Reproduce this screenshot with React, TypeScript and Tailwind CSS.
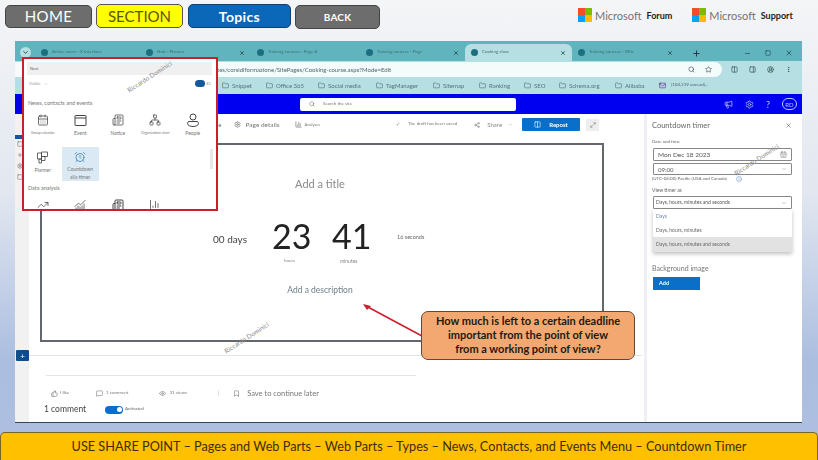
import { AlarmClock, BarChart3, Bookmark, CalendarDays, ChartNoAxesCombined, ChevronDown, Columns2, Eye, Folder, Info, Mail, Maximize2, Megaphone, MessageSquare, Minus, MoreVertical, Network, Newspaper, PanelRight, Plus, Search, Settings, Share2, Square, Star, ThumbsUp, TrendingUp, X, CircleUserRound } from "lucide-react";

function Ms({ label }: { label: string }) {
  return (
    <div className="flex items-center">
      <div className="grid h-[14px] w-[14px] grid-cols-2 gap-0">
        <div className="bg-[#f25022]" />
        <div className="bg-[#7fba00]" />
        <div className="bg-[#00a4ef]" />
        <div className="bg-[#ffb900]" />
      </div>
      <span className="ml-[3px] text-[11px] leading-none text-[#737373]">Microsoft</span>
      <span className="ml-[5px] text-[9px] font-bold leading-none text-[#222]">{label}</span>
    </div>
  );
}

function Tab({ label, w, active, close = true }: { label: string; w: string; active?: boolean; close?: boolean }) {
  return (
    <div className={`flex h-full shrink-0 items-center pl-[6px] pr-[6px] ${w} ${active ? "rounded-t-[6px] bg-[#b6dfe3]" : ""}`}>
      <div className="h-[7px] w-[7px] shrink-0 rounded-full bg-[#1d6f80]" />
      <span className="ml-[4px] flex-1 truncate text-[4.5px] text-[#3f6f76]">{label}</span>
      {close && <X className="h-[6px] w-[6px] shrink-0 text-[#244]" strokeWidth={3} />}
    </div>
  );
}

function Fav({ label, w }: { label: string; w: string }) {
  return (
    <div className={`flex shrink-0 items-center gap-[3px] ${w}`}>
      <Folder className="h-[7px] w-[7px] text-[#47666b]" />
      <span className="text-[6px] text-[#55727a]">{label}</span>
    </div>
  );
}

function Part({ icon, label, small, active }: { icon: React.ReactNode; label: React.ReactNode; small?: boolean; active?: boolean }) {
  return (
    <div className={`flex h-[34px] w-[37.5px] flex-col items-center pt-[3px] ${active ? "bg-[#dbe9f5]" : ""}`}>
      <div className="flex h-[14px] items-center text-[#444]">{icon}</div>
      <div className={`mt-[2px] text-center leading-[8px] text-[#777] ${small ? "text-[3.5px]" : "text-[5px]"}`}>{label}</div>
    </div>
  );
}

function Watermark({ className }: { className: string }) {
  return <div className={`absolute -rotate-[33deg] whitespace-nowrap text-[6.5px] text-[#8b8b8b] ${className}`}>Riccardo Dominici</div>;
}

function EventIcon() {
  return (
    <svg className="h-[13px] w-[13px]" viewBox="0 0 13 13" fill="none" stroke="currentColor">
      <rect x="1" y="1.5" width="11" height="10" rx="0.5" />
      <path d="M1 4h11" />
    </svg>
  );
}

function PersonIcon() {
  return (
    <svg className="h-[14px] w-[14px]" viewBox="0 0 14 14" fill="none" stroke="currentColor">
      <circle cx="7" cy="4" r="3" />
      <path d="M3 8.5h8a2 2 0 0 1 1.5 2c0 2-3 3-5.5 3s-5.5-1-5.5-3a2 2 0 0 1 1.5-2z" />
    </svg>
  );
}

function PlannerIcon() {
  return (
    <svg className="h-[13px] w-[13px]" viewBox="0 0 13 13" fill="none" stroke="currentColor" strokeWidth="0.8">
      <path d="M1.5 2h4v6h-4zM5.5 1h6v4.5h-6zM5.5 5.5h3.5v4h-3.5zM3 8h2.5v4H3z" />
    </svg>
  );
}

export default function App() {
  const i = "h-[12px] w-[12px]";
  return (
    <div className="relative flex h-[460px] w-[818px] flex-col overflow-hidden bg-[linear-gradient(180deg,#f4f5f7_0%,#e2e7f0_42%,#acbee0_78%,#aebfe0_100%)] font-['Lato','Liberation_Sans',sans-serif]">
      {/* Top navigation */}
      <div className="flex h-[41px] shrink-0 items-start pl-[5px] pt-[4px]">
        <div className="mt-[1px] flex h-[23px] w-[87px] items-center justify-center rounded-[5px] border border-[#444] bg-[#6d6d6d] text-[15px] tracking-wide text-white">HOME</div>
        <div className="ml-[4px] flex h-[24px] w-[87px] items-center justify-center rounded-[5px] border border-[#555] bg-[#ffff00] text-[15px] text-[#55580a]">SECTION</div>
        <div className="ml-[5px] flex h-[24px] w-[103px] items-center justify-center rounded-[5px] border border-[#123f70] bg-[#0b68b8] pt-[1px] text-[14px] font-bold tracking-wide text-white">Topics</div>
        <div className="ml-[4px] mt-[1px] flex h-[24px] w-[85px] items-center justify-center rounded-[5px] border border-[#444] bg-[#6d6d6d] text-[10px] font-bold tracking-wide text-white">BACK</div>
        <div className="ml-[198px] mt-[4px]"><Ms label="Forum" /></div>
        <div className="ml-[20px] mt-[4px]"><Ms label="Support" /></div>
      </div>

      {/* Browser window */}
      <div className="relative ml-[15px] flex h-[382px] w-[787px] shrink-0 flex-col border-b border-[#33475a] bg-white blur-[0.35px]">
        {/* Tabs */}
        <div className="flex h-[20px] shrink-0 items-end bg-[#5fb4bd] pl-[5px]">
          <div className="mb-[3px] mr-[4px] flex h-[11px] w-[11px] shrink-0 items-center justify-center rounded-full bg-[#b6dfe3]"><ChevronDown className="h-[7px] w-[7px] text-[#234]" strokeWidth={3} /></div>
          <div className="flex h-[17px]">
            <Tab label="Active users - X Interface" w="w-[105px]" close={false} />
            <Tab label="Hub - Planner" w="w-[111px]" />
            <Tab label="Training courses - Page A" w="w-[109px]" close={false} />
            <Tab label="Training courses - Page" w="w-[105px]" />
            <Tab label="Cooking class" w="w-[107px]" active />
            <Tab label="Training courses - Wile" w="w-[107px]" />
          </div>
          <Plus className="mb-[3px] ml-[13px] h-[9px] w-[9px] shrink-0 text-[#234]" strokeWidth={2.5} />
          <div className="mb-[4px] ml-[43px] flex items-center gap-[14px] text-[#234]">
            <Minus className="h-[7px] w-[7px]" />
            <Square className="h-[6px] w-[6px]" />
            <X className="h-[8px] w-[8px]" />
          </div>
        </div>
        {/* Address bar */}
        <div className="flex h-[16px] shrink-0 items-center bg-[#b6dfe3]">
          <div className="flex h-[15px] w-[707px] items-center rounded-r-full bg-[#f3fbfb] pl-[202px] pr-[10px]">
            <span className="flex-1 text-[6px] text-[#56666a]">tes/corsidiformazione/SitePages/Cooking-course.aspx?Mode=Edit</span>
            <Search className="h-[7px] w-[7px] text-[#345]" />
            <Star className="ml-[10px] h-[7px] w-[7px] text-[#345]" />
          </div>
          <div className="ml-[9px] flex items-center gap-[11px] text-[#244]">
            <Columns2 className="h-[7px] w-[7px]" />
            <PanelRight className="h-[7px] w-[7px]" />
            <CircleUserRound className="h-[7px] w-[7px]" />
            <MoreVertical className="h-[7px] w-[7px]" />
          </div>
        </div>
        {/* Bookmarks */}
        <div className="flex h-[17px] shrink-0 items-center bg-[#b6dfe3] pl-[207px]">
          <Fav label="Snippet" w="w-[44px]" />
          <Fav label="Office 365" w="w-[52px]" />
          <Fav label="Social media" w="w-[58px]" />
          <Fav label="TagManager" w="w-[57px]" />
          <Fav label="Sitemap" w="w-[46px]" />
          <Fav label="Ranking" w="w-[45px]" />
          <Fav label="SEO" w="w-[35px]" />
          <Fav label="Schema.org" w="w-[56px]" />
          <Fav label="Alibaba" w="w-[44px]" />
          <Mail className="mr-[5px] h-[7px] w-[7px] text-[#5a1c8c]" />
          <span className="text-[4.5px] text-[#56666a]">(104,319 unread)...</span>
        </div>
        {/* Blue bar */}
        <div className="flex h-[20px] shrink-0 items-center bg-[#0000f0] pl-[285px] pr-[5px]">
          <div className="flex h-[13px] w-[216px] items-center rounded-[2px] bg-white pl-[9px]">
            <Search className="h-[6px] w-[6px] text-[#666]" />
            <span className="ml-[8px] text-[4.5px] text-[#777]">Search the site</span>
          </div>
          <div className="ml-auto flex items-center gap-[12px] text-[#b9c8ff]">
            <Megaphone className="h-[9px] w-[9px]" />
            <Settings className="h-[9px] w-[9px]" />
            <span className="text-[9px] leading-none">?</span>
            <div className="flex h-[12px] w-[15px] items-center justify-center rounded-full border border-[#b9c8ff] text-[6px]">RD</div>
          </div>
        </div>

        {/* Content */}
        <div className="flex min-h-0 flex-1">
          {/* Rail */}
          <div className="flex w-[14px] shrink-0 flex-col bg-[#f1f1f1] pt-[21px] text-[#666]">
            <div className="mb-[2px] h-[4px] w-[7px] bg-[#14589c]" />
            <div className="flex flex-col items-start gap-[5px] pl-[2px]">
              <Square className="h-[6px] w-[6px]" />
              <Plus className="h-[6px] w-[6px]" />
              <Settings className="h-[6px] w-[6px]" />
              <Square className="h-[6px] w-[6px]" />
            </div>
          </div>
          {/* Main */}
          <div className="relative min-w-0 flex-1">
            {/* Command bar */}
            <div className="flex h-[21px] items-center pl-[186px]">
              <span className="text-[6px] text-[#666]">he</span>
              <Settings className="ml-[12px] h-[7px] w-[7px] text-[#666]" />
              <span className="ml-[5px] text-[6.5px] text-[#777]">Page details</span>
              <BarChart3 className="ml-[15px] h-[7px] w-[7px] text-[#666]" />
              <span className="ml-[3px] text-[4px] text-[#777]">Analyses</span>
              <span className="ml-[76px] text-[5px] text-[#888]">✓</span>
              <span className="ml-[8px] text-[4.5px] text-[#777]">The draft has been saved</span>
              <Share2 className="ml-[17px] h-[6px] w-[6px] text-[#777]" />
              <span className="ml-[7px] text-[6px] text-[#888]">Share</span>
              <ChevronDown className="ml-[6px] h-[5px] w-[5px] text-[#aaa]" />
              <div className="ml-[9px] flex h-[13px] w-[58px] items-center justify-center gap-[8px] rounded-[1px] bg-[#0a6fc9] text-white">
                <Columns2 className="h-[7px] w-[7px]" />
                <span className="text-[6px] font-bold">Repost</span>
              </div>
              <div className="ml-[6px] flex h-[12px] w-[13px] items-center justify-center bg-[#eee]"><Maximize2 className="h-[6px] w-[6px] text-[#777]" /></div>
            </div>
            {/* Web part frame */}
            <div className="ml-[11px] mt-[8px] flex h-[199px] w-[564px] flex-col items-center border-2 border-[#63666c] pl-[6px] pr-[10px]">
              <div className="mt-[31px] text-[11px] text-[#8a8a8a]">Add a title</div>
              <div className="mt-[23px] flex h-[50px] w-full items-start pl-[165px]">
                <div className="mt-[16px] w-[59px] text-[10px] text-[#444]">00 days</div>
                <div className="flex w-[60px] flex-col">
                  <span className="text-[34px] leading-[40px] text-[#222]">23</span>
                  <span className="ml-[12px] mt-[2px] text-[4.5px] text-[#888]">hours</span>
                </div>
                <div className="flex w-[65px] flex-col">
                  <span className="text-[34px] leading-[40px] text-[#222]">41</span>
                  <span className="ml-[8px] mt-[2px] text-[5px] text-[#888]">minutes</span>
                </div>
                <div className="mt-[17px] text-[5.5px] text-[#666]">16 seconds</div>
              </div>
              <div className="mt-[18px] text-[8.5px] text-[#6f7d86]">Add a description</div>
            </div>
            <div className="ml-[-14px] mt-[13px] h-px w-[627px] bg-[#e5e5e5]" />
            <div className="ml-[17px] mt-[19px] h-px w-[370px] bg-[#e3e3e3]" />
            {/* Reactions */}
            <div className="ml-[22px] mt-[12px] flex items-center">
              <ThumbsUp className="h-[7px] w-[7px] text-[#777]" />
              <span className="ml-[2px] text-[4.5px] text-[#777]">I like</span>
              <MessageSquare className="ml-[27px] h-[7px] w-[7px] text-[#777]" />
              <span className="ml-[3px] text-[4.5px] text-[#777]">1 comment</span>
              <Eye className="ml-[31px] h-[7px] w-[7px] text-[#777]" />
              <span className="ml-[3px] text-[4.5px] text-[#777]">31 views</span>
              <span className="ml-[31px] text-[5px] text-[#bbb]">|</span>
              <Bookmark className="ml-[14px] h-[7px] w-[7px] text-[#777]" />
              <span className="ml-[7px] text-[7.5px] text-[#777]">Save to continue later</span>
            </div>
            <div className="ml-[15px] mt-[4px] flex items-center">
              <span className="w-[61px] text-[8.5px] text-[#444]">1 comment</span>
              <div className="flex h-[8px] w-[18px] items-center justify-end rounded-full bg-[#0a6fc9] pr-[1px]"><div className="h-[5px] w-[5px] rounded-full bg-white" /></div>
              <span className="ml-[2px] text-[4.5px] text-[#666]">Activated</span>
            </div>
            <div className="absolute left-[1px] top-[236px] flex h-[11px] w-[13px] -translate-x-[14px] items-center justify-center rounded-[1px] bg-[#0f4c8a] text-[8px] leading-none text-white">+</div>
          </div>
          {/* Side panel */}
          <div className="w-[158px] shrink-0 border-l-[3px] border-[#eef0f3] pl-[5px] pr-[9px] pt-[6px]">
            <div className="flex items-center justify-between pr-[1px] text-[#555]">
              <span className="text-[7.5px] text-[#666]">Countdown timer</span>
              <X className="h-[7px] w-[7px]" />
            </div>
            <div className="mt-[8px] text-[4.5px] text-[#666]">Date and time</div>
            <div className="ml-[1px] mt-[2px] flex h-[13px] w-[139px] items-center justify-between rounded-[1px] border border-[#888] px-[4px] text-[6.5px] text-[#555]">
              <span>Mon Dec 18 2023</span><CalendarDays className="h-[7px] w-[7px] text-[#888]" />
            </div>
            <div className="ml-[1px] mt-[2px] flex h-[12px] w-[139px] items-center justify-between rounded-[1px] border border-[#888] px-[4px] text-[6px] text-[#555]">
              <span>09:00</span><ChevronDown className="h-[6px] w-[6px] text-[#999]" />
            </div>
            <div className="mt-[1px] flex items-center text-[4.5px] text-[#666]">
              <span>(UTC-04:00) Pacific (USA and Canada)</span><Info className="ml-[9px] h-[6px] w-[6px] text-[#5a86c8]" />
            </div>
            <div className="mt-[4px] text-[5px] text-[#666]">View timer as</div>
            <div className="ml-[1px] mt-[2px] flex h-[13px] w-[139px] items-center justify-between rounded-[1px] border border-[#888] pl-[2px] pr-[4px] text-[5px] text-[#555]">
              <span>Days, hours, minutes and seconds</span><ChevronDown className="h-[6px] w-[6px] text-[#888]" />
            </div>
            <div className="ml-[1px] flex w-[139px] flex-col text-[5px] text-[#666] shadow-[0_2px_4px_rgba(0,0,0,0.25)]">
              <div className="flex h-[14px] items-center pl-[3px] text-[#6c86a8]">Days</div>
              <div className="flex h-[14px] items-center pl-[3px]">Days, hours, minutes</div>
              <div className="flex h-[15px] items-center bg-[#e2e2e2] pl-[3px]">Days, hours, minutes and seconds</div>
            </div>
            <div className="mt-[11px] text-[7px] text-[#777]">Background image</div>
            <div className="ml-[1px] mt-[3px] flex h-[13px] w-[47px] items-center bg-[#0a6fc9] pl-[6px] text-[5.5px] font-bold text-white">Add</div>
          </div>
        </div>
      </div>

      {/* Footer */}
      <div className="mt-[9px] flex h-[28px] shrink-0 items-center justify-center rounded-t-[5px] border border-b-0 border-[#7a6520] bg-[#ffc000] text-[12.7px] text-[#3d2d00]">
        USE SHARE POINT – Pages and Web Parts – Web Parts – Types – News, Contacts, and Events Menu – Countdown Timer
      </div>

      {/* Overlaid menu */}
      <div className="absolute left-[22px] top-[57px] h-[154px] w-[196px] overflow-hidden border-2 border-[#c9202c] bg-white pl-[3px] pr-[4px]">
        <div className="mt-[3px] flex h-[13px] items-center bg-[#f0f0f0] pl-[3px] text-[4px] text-[#666]">Next</div>
        <div className="flex h-[17px] items-center justify-between pl-[2px] pr-[1px] text-[4px] text-[#999]">
          <span className="flex items-center gap-[3px]">Visible <ChevronDown className="h-[4px] w-[4px]" /></span>
          <span className="flex items-center gap-[1px]"><span className="h-[7px] w-[10px] rounded-full bg-[#14589c]" /><span>81</span></span>
        </div>
        <div className="mt-[7px] pl-[1px] text-[5.5px] text-[#777]">News, contacts and events</div>
        <div className="-ml-[3px] mt-[3px] flex">
          <Part small icon={<CalendarDays className={i} strokeWidth={1.5} />} label="Group calendar" />
          <Part icon={<EventIcon />} label="Event" />
          <Part icon={<Newspaper className={i} strokeWidth={1.5} />} label="Notice" />
          <Part small icon={<Network className={i} strokeWidth={1.5} />} label="Organization chart" />
          <Part icon={<PersonIcon />} label="People" />
        </div>
        <div className="-ml-[3px] mt-[3px] flex">
          <Part icon={<PlannerIcon />} label="Planner" />
          <Part active icon={<AlarmClock className="h-[12px] w-[12px] text-[#2f7fb5]" strokeWidth={1.5} />} label={<>Countdown<br />alla timer</>} />
        </div>
        <div className="mt-[3px] pl-[1px] text-[5.5px] text-[#777]">Data analysis</div>
        <div className="-ml-[3px] mt-[6px] flex text-[#444]">
          <div className="flex w-[37.5px] justify-center"><TrendingUp className={i} strokeWidth={1.5} /></div>
          <div className="flex w-[37.5px] justify-center"><ChartNoAxesCombined className={i} strokeWidth={1.5} /></div>
          <div className="flex w-[37.5px] justify-center"><Newspaper className={i} strokeWidth={2} /></div>
          <div className="flex w-[37.5px] justify-center"><BarChart3 className={i} strokeWidth={1.5} /></div>
        </div>
        <div className="absolute right-[3px] top-[90px] h-[20px] w-[3px] bg-[#e8e8e8]" />
        <div className="absolute left-[100px] top-[13px] -rotate-[33deg] whitespace-nowrap text-[6.5px] text-[#8b8b8b]">Riccardo Dominici</div>
      </div>

      <Watermark className="left-[731px] top-[155px]" />
      <Watermark className="left-[221px] top-[333px]" />

      {/* Arrow */}
      <svg className="absolute left-[360px] top-[300px] h-[45px] w-[70px]" viewBox="0 0 70 45" fill="none">
        <path d="M62 36 L6 6" stroke="#c9202c" strokeWidth="1.5" />
        <path d="M3 4 L11 6 L7 10 Z" fill="#c9202c" />
      </svg>
      {/* Callout */}
      <div className="absolute left-[421px] top-[311px] flex h-[49px] w-[214px] flex-col items-center justify-center rounded-[7px] border border-[#5e4a38] bg-[#f4a871] pb-[2px] text-center text-[11px] font-bold leading-[14px] text-[#231a10]">
        <div>How much is left to a certain deadline</div>
        <div>important from the point of view</div>
        <div>from a working point of view?</div>
      </div>
    </div>
  );
}
